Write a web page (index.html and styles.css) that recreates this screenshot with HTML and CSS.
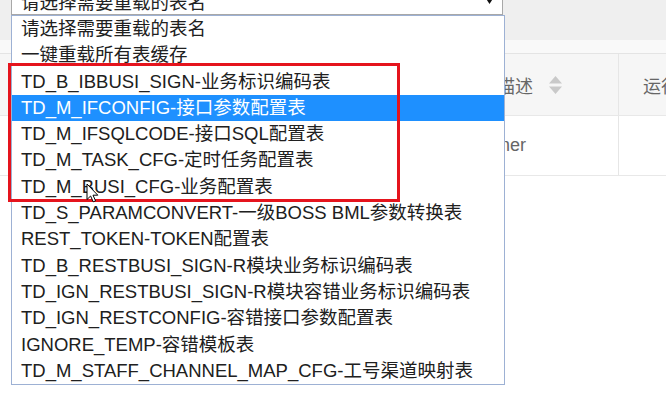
FILE: index.html
```html
<!DOCTYPE html>
<html lang="zh-CN">
<head>
<meta charset="utf-8">
<title>重载表缓存</title>
<link rel="stylesheet" href="styles.css">
</head>
<body>
<div class="page">
  <div class="toolbar">
    <div class="select">
      <span class="select-text">请选择需要重载的表名</span>
      <svg class="select-arrow" width="9" height="7" viewBox="0 0 9 7"><path d="M0 0 H9 L4.5 7 Z" fill="#111"/></svg>
    </div>
  </div>
  <div class="band"></div>
  <div class="table">
    <div class="row head">
      <div class="cell c1"></div>
      <div class="cell c2">描述
        <svg class="sort" width="13" height="18" viewBox="0 0 13 18"><path d="M6.5 0 L13 7.5 H0 Z M0 10.5 H13 L6.5 18 Z" fill="#c9c9c9"/></svg>
      </div>
      <div class="cell c3">运行状态</div>
    </div>
    <div class="row body">
      <div class="cell c1"></div>
      <div class="cell c2 data">customer</div>
      <div class="cell c3"></div>
    </div>
  </div>

  <ul class="dropdown">
    <li>请选择需要重载的表名</li>
    <li>一键重载所有表缓存</li>
    <li>TD_B_IBBUSI_SIGN-业务标识编码表</li>
    <li class="selected">TD_M_IFCONFIG-接口参数配置表</li>
    <li>TD_M_IFSQLCODE-接口SQL配置表</li>
    <li>TD_M_TASK_CFG-定时任务配置表</li>
    <li>TD_M_BUSI_CFG-业务配置表</li>
    <li>TD_S_PARAMCONVERT-一级BOSS BML参数转换表</li>
    <li>REST_TOKEN-TOKEN配置表</li>
    <li>TD_B_RESTBUSI_SIGN-R模块业务标识编码表</li>
    <li>TD_IGN_RESTBUSI_SIGN-R模块容错业务标识编码表</li>
    <li>TD_IGN_RESTCONFIG-容错接口参数配置表</li>
    <li>IGNORE_TEMP-容错模板表</li>
    <li>TD_M_STAFF_CHANNEL_MAP_CFG-工号渠道映射表</li>
  </ul>

  <div class="mark"></div>

  <svg class="cursor" width="13" height="20" viewBox="0 0 13 20">
    <path d="M1 1 L1 16.5 L4.6 13 L7.2 18.8 L9.6 17.8 L7 12.2 L11.8 12.2 Z" fill="#fff" stroke="#000" stroke-width="1" stroke-linejoin="round"/>
  </svg>
</div>
</body>
</html>
```

FILE: styles.css
```css
html, body {
  margin: 0;
  padding: 0;
  background: #ffffff;
  overflow: hidden;
}

body {
  font-family: "Liberation Sans", "Noto Sans CJK SC", sans-serif;
  font-size: 18.5px;
  color: #222;
}

.page {
  position: relative;
  width: 666px;
  height: 418px;
  overflow: hidden;
}

.toolbar {
  display: flex;
  align-items: flex-start;
  height: 40px;
  background: #efefef;
  padding-left: 11px;
  box-sizing: border-box;
}

.select {
  width: 492px;
  height: 24px;
  margin-top: -9px;
  box-sizing: border-box;
  background: #fff;
  border: 1px solid #a8a8a8;
  display: flex;
  align-items: center;
  justify-content: space-between;
  padding: 0 8px 0 9px;
}

.select-text {
  line-height: 22px;
  white-space: nowrap;
}

.select-arrow {
  display: block;
  margin-top: -6px;
}

.band {
  height: 13px;
  background: #f9f9f9;
}

.table {
  border-top: 1px solid #e4e4e4;
}

.row {
  display: grid;
  grid-template-columns: 440px 178px 1fr;
}

.row.head {
  height: 61px;
  background: #f6f6f6;
  border-bottom: 1px solid #e8e8e8;
}

.row.body {
  height: 59px;
  background: #fff;
  border-bottom: 1px solid #e8e8e8;
}

.cell {
  display: flex;
  align-items: center;
  white-space: nowrap;
  font-size: 18px;
  color: #666;
}

.head .c2 {
  padding-left: 57px;
  gap: 16px;
}

.body .c2 {
  padding-left: 12px;
}

.c3 {
  border-left: 1px solid #e6e6e6;
  padding-left: 24px;
}

.sort {
  display: block;
}

.dropdown {
  position: absolute;
  top: 15px;
  left: 11px;
  width: 494px;
  box-sizing: border-box;
  margin: 0;
  padding: 0;
  list-style: none;
  background: #fff;
  border: 1px solid #9db1d4;
}

.dropdown li {
  height: 26.3px;
  line-height: 26.3px;
  padding-left: 9px;
  white-space: nowrap;
  color: #202020;
}

.dropdown li.selected {
  background: #1e90ff;
  color: #fff;
}

.mark {
  position: absolute;
  left: 8px;
  top: 63px;
  width: 392px;
  height: 139px;
  box-sizing: border-box;
  border: 3px solid #e5141d;
}

.cursor {
  position: absolute;
  left: 86px;
  top: 183px;
}
```
